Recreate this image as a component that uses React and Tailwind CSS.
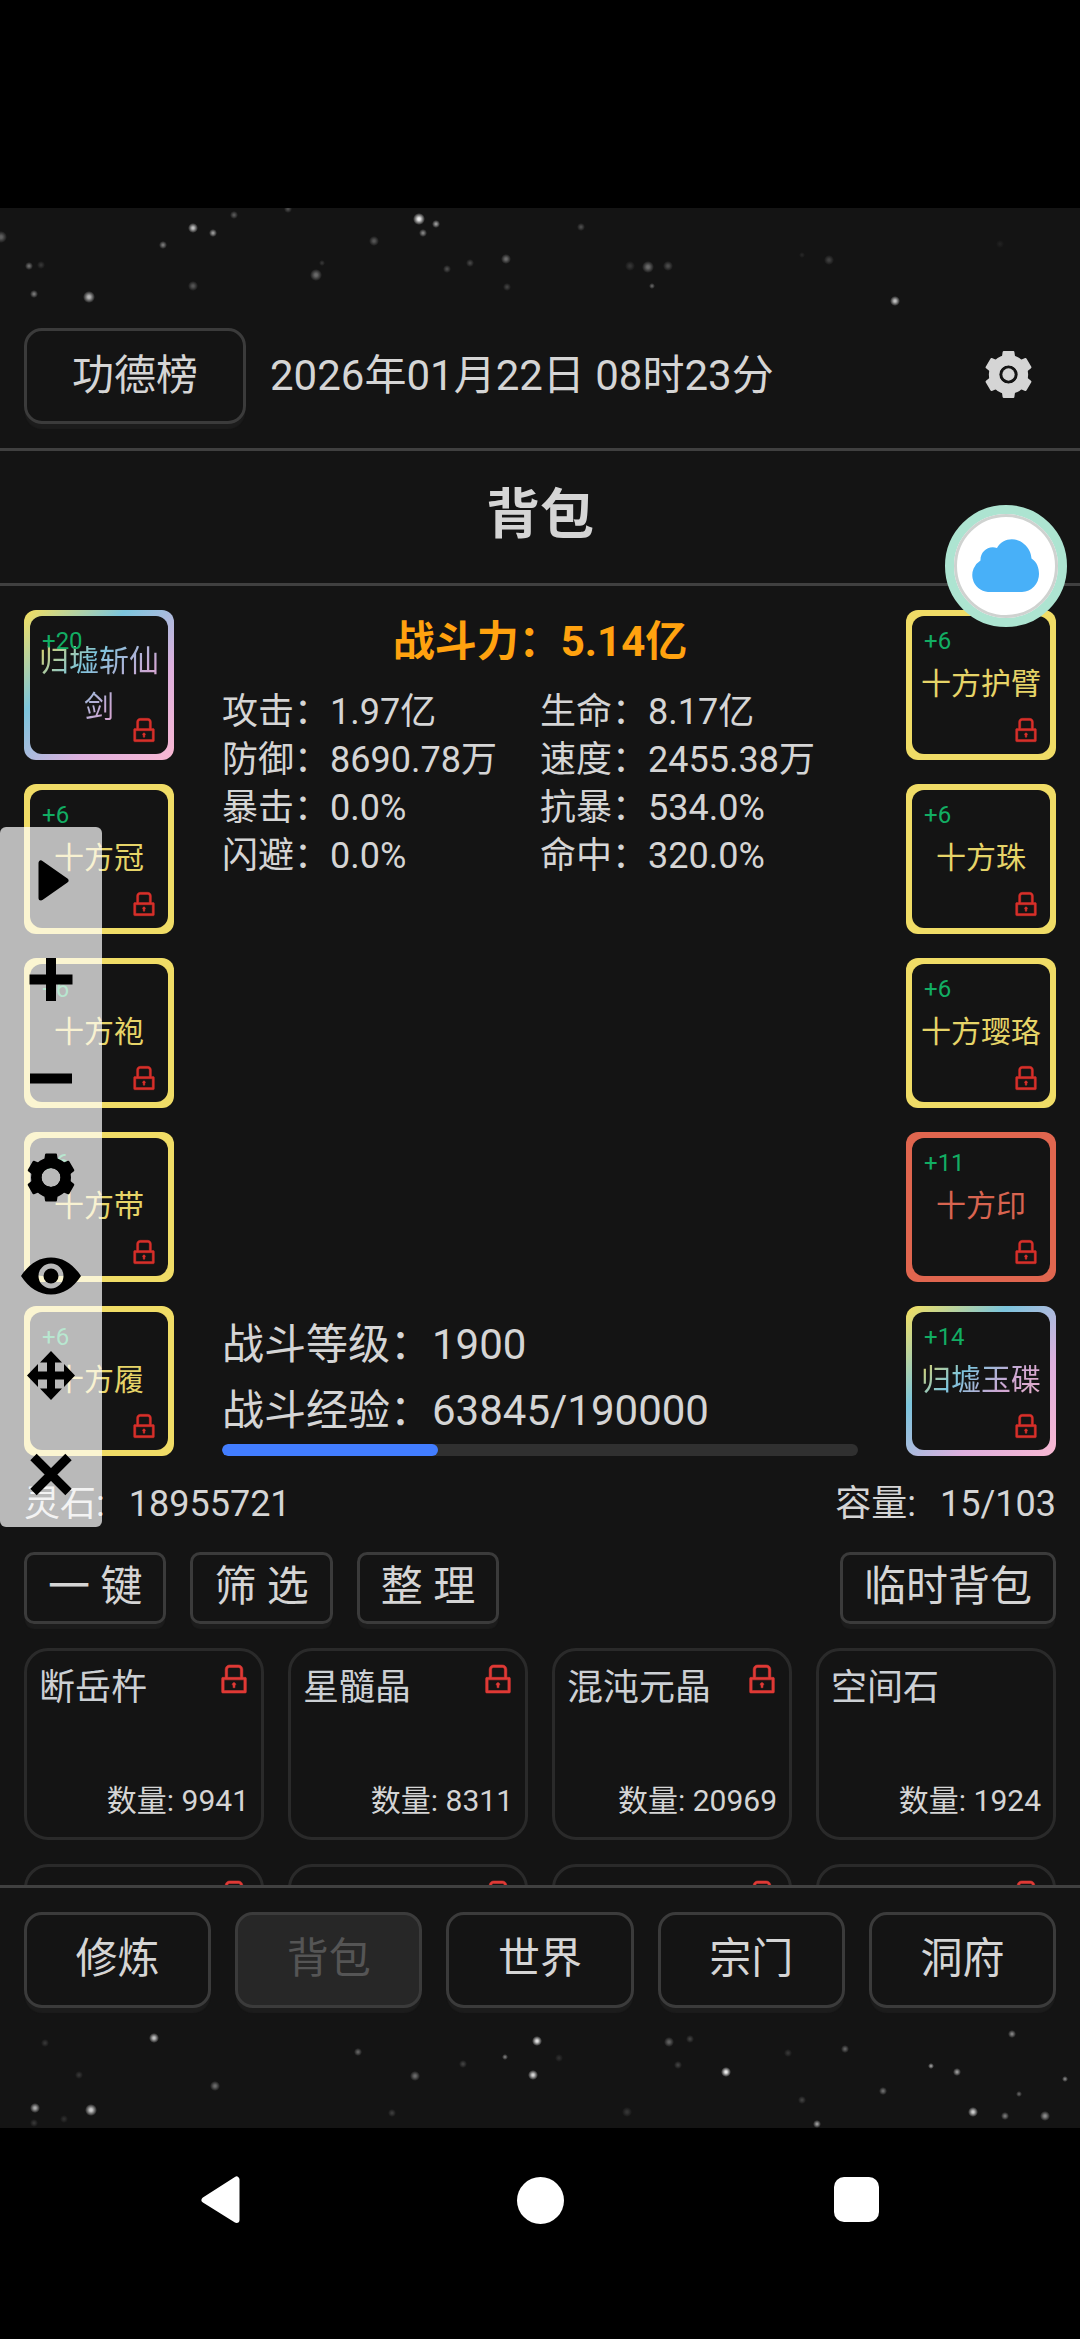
import { AiOutlineLock } from 'react-icons/ai';

// [x, y, opacity, radius]
const topStars = [
  [1, 29, 0.35, 6], [29, 58, 0.4, 4], [41, 57, 0.15, 4], [34, 86, 0.45, 4], [89, 89, 0.75, 6],
  [163, 37, 0.45, 4], [193, 20, 0.8, 5], [213, 25, 0.6, 4], [234, 7, 0.3, 4], [288, 1, 0.25, 4],
  [193, 78, 0.3, 5], [419, 11, 1, 6], [436, 16, 0.6, 4], [423, 25, 0.5, 4], [374, 33, 0.3, 5],
  [316, 67, 0.4, 6], [322, 55, 0.15, 3], [447, 61, 0.25, 4], [470, 55, 0.22, 4], [506, 51, 0.4, 5],
  [507, 79, 0.2, 4], [581, 19, 0.25, 4], [630, 58, 0.15, 5], [648, 59, 0.4, 6], [668, 58, 0.25, 5],
  [652, 78, 0.35, 3], [829, 52, 0.2, 5], [895, 93, 0.8, 5], [1000, 36, 0.06, 4], [802, 47, 0.08, 3],
];

const bottomStars = [
  [154, 8, 0.8, 5], [45, 13, 0.15, 4], [358, 22, 0.35, 4], [463, 34, 0.2, 4], [415, 46, 0.4, 5],
  [505, 27, 0.45, 3], [537, 11, 0.95, 5], [533, 45, 0.9, 5], [559, 28, 0.12, 4], [669, 12, 0.35, 5],
  [690, 9, 0.2, 4], [678, 35, 0.2, 4], [726, 42, 1, 5], [788, 23, 0.15, 4], [845, 19, 0.35, 4],
  [931, 36, 0.6, 3], [957, 42, 0.6, 4], [1012, 4, 0.5, 4], [1065, 49, 0.5, 3], [1019, 64, 0.35, 3],
  [883, 61, 0.4, 4], [802, 70, 0.2, 4], [973, 82, 0.85, 5], [1005, 86, 0.45, 4], [1045, 86, 0.55, 5],
  [817, 94, 0.6, 4], [627, 82, 0.15, 5], [392, 83, 0.18, 4], [215, 56, 0.4, 5], [79, 45, 0.15, 4],
  [35, 78, 0.7, 5], [91, 80, 0.85, 6], [34, 93, 0.15, 4], [64, 89, 0.12, 4],
];

const leftGear = [
  { name: '归墟斩仙剑', plus: 20, tone: 'rainbow' },
  { name: '十方冠', plus: 6, tone: 'yellow' },
  { name: '十方袍', plus: 6, tone: 'yellow' },
  { name: '十方带', plus: 6, tone: 'yellow' },
  { name: '十方履', plus: 6, tone: 'yellow' },
];

const rightGear = [
  { name: '十方护臂', plus: 6, tone: 'yellow' },
  { name: '十方珠', plus: 6, tone: 'yellow' },
  { name: '十方璎珞', plus: 6, tone: 'yellow' },
  { name: '十方印', plus: 11, tone: 'red' },
  { name: '归墟玉碟', plus: 14, tone: 'rainbow' },
];

const stats = [
  ['攻击', '1.97亿'], ['生命', '8.17亿'],
  ['防御', '8690.78万'], ['速度', '2455.38万'],
  ['暴击', '0.0%'], ['抗暴', '534.0%'],
  ['闪避', '0.0%'], ['命中', '320.0%'],
];

const items = [
  { name: '断岳杵', count: 9941, locked: true },
  { name: '星髓晶', count: 8311, locked: true },
  { name: '混沌元晶', count: 20969, locked: true },
  { name: '空间石', count: 1924, locked: false },
  { locked: true },
  { locked: true },
  { locked: true },
  { locked: true },
];

const tabs = ['修炼', '背包', '世界', '宗门', '洞府'];

const frameTone = {
  rainbow: 'bg-[linear-gradient(135deg,#f6e05e,#7cc5dd_34%,#deb0de_68%,#f9b8d2)]',
  yellow: 'bg-[#f0dc66]',
  red: 'bg-[#e0664f]',
};

const textTone = {
  rainbow: 'bg-[linear-gradient(135deg,#e6d25c,#7cc5dd_34%,#cfa6d2_68%,#e8b0c8)] bg-clip-text text-transparent',
  yellow: 'text-[#e6d468]',
  red: 'text-[#d86450]',
};

const button = 'flex items-center justify-center border-[3px] border-[#3b3b3b] shadow-[0_6px_1px_-1px_#1c1c1c]';

function Stars({ id, stars, className }) {
  return (
    <svg viewBox="0 0 1080 98" className={className}>
      <radialGradient id={id}>
        <stop offset="0.2" stopColor="#e8e8e8" />
        <stop offset="1" stopColor="#e8e8e8" stopOpacity="0" />
      </radialGradient>
      {stars.map(([x, y, o, r], i) => (
        <circle key={i} cx={x} cy={y} r={r} opacity={o} fill={`url(#${id})`} />
      ))}
    </svg>
  );
}

function Cog({ dot, className }) {
  return (
    <svg viewBox="0 0 24 24" fill="currentColor" className={className}>
      <path
        fillRule="evenodd"
        d="M19.14 12.94c.04-.3.06-.61.06-.94 0-.32-.02-.64-.07-.94l2.03-1.58c.18-.14.23-.41.12-.61l-1.92-3.32c-.12-.22-.37-.29-.59-.22l-2.39.96c-.5-.38-1.03-.7-1.62-.94L14.4 2.81c-.04-.24-.24-.41-.48-.41h-3.84c-.24 0-.43.17-.47.41L9.25 5.35C8.66 5.59 8.12 5.92 7.63 6.29L5.24 5.33c-.22-.08-.47 0-.59.22L2.74 8.87C2.62 9.08 2.66 9.34 2.86 9.48l2.03 1.58C4.84 11.36 4.8 11.69 4.8 12s.02.64.07.94l-2.03 1.58c-.18.14-.23.41-.12.61l1.92 3.32c.12.22.37.29.59.22l2.39-.96c.5.38 1.03.7 1.62.94l.36 2.54c.05.24.24.41.48.41h3.84c.24 0 .44-.17.47-.41l.36-2.54c.59-.24 1.13-.56 1.62-.94l2.39.96c.22.08.47 0 .59-.22l1.92-3.32c.12-.22.07-.47-.12-.61zM12 8.200a3.800 3.800 0 100 7.600a3.800 3.800 0 100-7.600z"
      />
      <circle cx="12" cy="12" r="5.900" fill="none" stroke="currentColor" strokeWidth="4.200" />
      {dot && <circle cx="12" cy="12" r="2.500" />}
    </svg>
  );
}

function GearSlot({ name, plus, tone }) {
  return (
    <div className={`size-[150px] rounded-xl p-1.5 ${frameTone[tone]}`}>
      <div className="relative flex h-full items-center justify-center rounded-xl bg-[#141414] pb-0.5">
        <span className={`max-w-[120px] text-center text-[30px] leading-[46px] ${textTone[tone]}`}>{name}</span>
        <span className="absolute left-3 top-[9px] text-2xl leading-8 text-[#12ad63]">+{plus}</span>
        <AiOutlineLock className="absolute bottom-[9px] right-[9px] size-[30px] stroke-[#d8302a] stroke-[16] text-[#d8302a]" />
      </div>
    </div>
  );
}

function ItemCard({ name, count, locked }) {
  return (
    <div className="flex h-48 flex-col justify-between rounded-3xl border-[3px] border-[#2a2a2a] px-3 pb-[13px] pt-[13px]">
      <div className="flex items-start justify-between">
        <span className="text-4xl leading-[48px] text-[#ccd0d4]">{name}</span>
        {locked && <AiOutlineLock className="-mt-[3px] ml-auto -mr-[3px] size-9 stroke-[#e03a36] stroke-[14] text-[#e03a36]" />}
      </div>
      {count && <span className="text-right text-[30px] leading-[46px]">数量: {count}</span>}
    </div>
  );
}

function Toolbar() {
  return (
    <div className="absolute left-0 top-[827px] flex h-[700px] w-[102px] flex-col items-center rounded-md bg-white/70 py-[3.5px] text-black *:h-[99px] *:w-[60px]">
      <svg viewBox="0 0 60 99">
        <path d="M20 32v35l25-17.5z" fill="currentColor" stroke="currentColor" strokeWidth="5" strokeLinejoin="round" />
      </svg>
      <svg viewBox="0 0 60 99" stroke="currentColor" strokeWidth="10">
        <path d="M30 28v43M8.500 49.500h43" />
      </svg>
      <svg viewBox="0 0 60 99" stroke="currentColor" strokeWidth="10">
        <path d="M9 49.500h42" />
      </svg>
      <Cog />
      <svg viewBox="0 0 60 99" fill="currentColor" fillRule="evenodd">
        <path d="M0 49C8 37 18 30.500 30 30.500S52 37 60 49C52 61 42 67.500 30 67.500S8 61 0 49zM30 36.500a12.500 12.500 0 100 25a12.500 12.500 0 100-25z" />
        <circle cx="30" cy="49" r="7.500" />
      </svg>
      <svg viewBox="0 0 60 99" fill="currentColor">
        <path d="M30 25L41 36.500H34V45.500H43V38L54 49.500L43 61V53.500H34V62.500H41L30 74L19 62.500H26V53.500H17V61L6 49.500L17 38V45.500H26V36.500H19z" />
      </svg>
      <svg viewBox="0 0 60 99" stroke="currentColor" strokeWidth="9">
        <path d="M12.500 32l35 35M47.500 32l-35 35" />
      </svg>
    </div>
  );
}

function CloudBubble() {
  return (
    <div className="absolute left-[945px] top-[505px] flex size-[122px] items-center justify-center rounded-full border-[9px] border-[#ade4d1] bg-white">
      <svg viewBox="0 0 104 104" className="size-[104px] shrink-0">
        <circle cx="52" cy="52" r="50.500" fill="none" stroke="#cfd2d0" strokeWidth="3" />
        <path d="M34 78a17 17 0 01-7.500-31.500C26 38 34 31 43 34C48 24 62 22.500 70 30C75 34 77 39 77.500 44.500C83 48 85 54 85 60A18 18 0 0168 78z" fill="#48b0f8" />
      </svg>
    </div>
  );
}

export default function App() {
  return (
    <div className="relative flex h-[2339px] w-[1080px] flex-col overflow-hidden bg-black font-['Roboto','Noto_Sans_CJK_SC',sans-serif] text-[42px] text-[#d5d5d5]">
      <div className="h-52 shrink-0" />
      <main className="flex h-[1920px] shrink-0 flex-col overflow-hidden bg-[#141414]">
        <Stars id="star-top" stars={topStars} className="h-[98px] w-full shrink-0" />

        <header className="flex h-[145px] shrink-0 items-center border-b-[3px] border-[#404040] px-6 pb-2.5">
          <button className={`${button} mt-2 h-24 w-[222px] rounded-[18px] pb-0.5`}>功德榜</button>
          <span className="ml-6 mt-1.5">2026年01月22日 08时23分</span>
          <Cog dot className="ml-auto mr-[18px] mt-1 size-[59px]" />
        </header>

        <h1 className="flex h-[135px] shrink-0 items-center justify-center border-b-[3px] border-[#404040] pb-1 text-[54px] font-bold">
          背包
        </h1>

        <section className="mt-6 flex shrink-0 justify-between px-6">
          <div className="flex flex-col gap-6">
            {leftGear.map((g) => <GearSlot key={g.name} {...g} />)}
          </div>
          <div className="flex w-[636px] flex-col">
            <div className="mt-0.5 text-center font-bold leading-[60px] text-[#ffa20f]">战斗力：5.14亿</div>
            <div className="mt-4 grid grid-cols-2 text-4xl leading-[48px]">
              {stats.map(([label, value]) => (
                <div key={label} className="whitespace-nowrap">{label}：{value}</div>
              ))}
            </div>
            <div className="mt-auto leading-[66px]">
              <div>战斗等级：1900</div>
              <div>战斗经验：63845/190000</div>
            </div>
            <div className="h-3 overflow-hidden rounded-full bg-[#303030]">
              <div className="h-full rounded-full bg-[#427dff]" style={{ width: `${Math.round((63845 / 190000) * 100)}%` }} />
            </div>
          </div>
          <div className="flex flex-col gap-6">
            {rightGear.map((g) => <GearSlot key={g.name} {...g} />)}
          </div>
        </section>

        <div className="mt-[21px] flex shrink-0 justify-between px-6 text-4xl leading-[54px]">
          <div className="flex gap-6"><span>灵石:</span><span>18955721</span></div>
          <div className="flex gap-6"><span>容量:</span><span>15/103</span></div>
        </div>

        <div className="mt-[21px] flex shrink-0 gap-6 px-6 *:h-[72px] *:rounded-[10px] *:px-[21px] *:pb-1">
          <button className={button}>一 键</button>
          <button className={button}>筛 选</button>
          <button className={button}>整 理</button>
          <button className={`${button} ml-auto`}>临时背包</button>
        </div>

        <div className="mt-6 grid h-[237px] shrink-0 grid-cols-4 content-start gap-6 overflow-hidden px-6">
          {items.map((item, i) => <ItemCard key={i} {...item} />)}
        </div>

        <nav className="grid shrink-0 grid-cols-5 gap-6 border-t-[3px] border-[#404040] px-6 pt-6">
          {tabs.map((tab) => (
            <button
              key={tab}
              className={`${button} h-24 rounded-[18px] pb-1 ${tab === '背包' ? 'bg-[#272727] text-[#555]' : ''}`}
            >
              {tab}
            </button>
          ))}
        </nav>

        <Stars id="star-bottom" stars={bottomStars} className="mt-auto h-[98px] w-full shrink-0" />
      </main>

      <div className="flex h-[143px] shrink-0 items-center justify-between pl-[200px] pr-[201px]">
        <svg viewBox="0 0 40 48" className="h-12 w-10" fill="white" stroke="white" strokeWidth="6" strokeLinejoin="round">
          <path d="M36.500 3.500v40.500L4.500 24z" />
        </svg>
        <div className="ml-1.5 mt-0.5 size-[47px] rounded-full bg-white" />
        <div className="size-[45px] rounded-[10px] bg-white" />
      </div>

      <CloudBubble />
      <Toolbar />
    </div>
  );
}
